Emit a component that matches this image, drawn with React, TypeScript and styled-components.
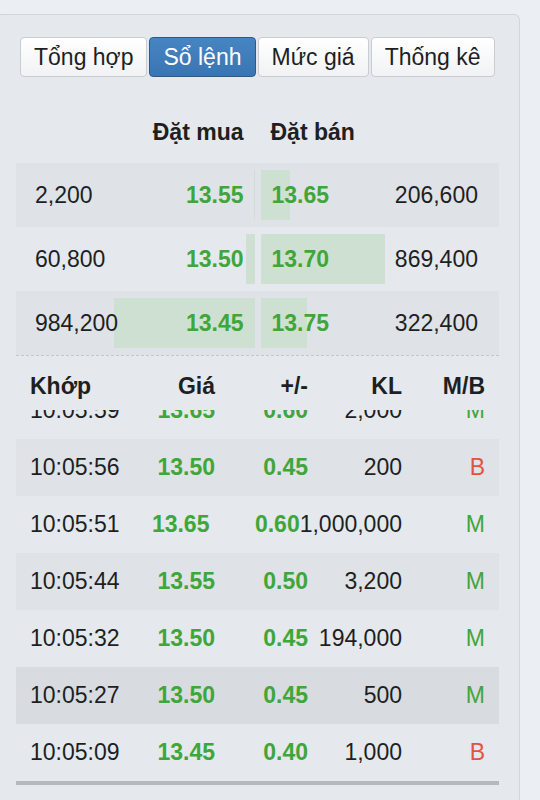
import { useLayoutEffect, useRef } from "react";
import styled, { createGlobalStyle } from "styled-components";

const GlobalStyle = createGlobalStyle`
  html, body {
    margin: 0;
    overflow: hidden;
  }
  body {
    background: #ebeef2;
    font-family: "Liberation Sans", Arial, sans-serif;
    color: #1d1f23;
  }
`;

const Panel = styled.div`
  margin: 14px 20px 0 -4px;
  min-height: calc(100vh - 14px);
  box-sizing: border-box;
  padding: 22px 20px 0 19px;
  background: #e5e8ec;
  border: 1px solid #d2d6db;
  border-bottom: none;
  border-radius: 6px 6px 0 0;
`;

const TabBar = styled.div`
  display: flex;
  gap: 2px;
  margin: 0 4px;
`;

const Tab = styled.button<{ $active?: boolean }>`
  flex: 0 0 auto;
  height: 40px;
  padding: 0 13px;
  white-space: nowrap;
  font: 23px "Liberation Sans", Arial, sans-serif;
  border-radius: 4px;
  border: 1px solid ${(p) => (p.$active ? "#2b5b8d" : "#c9cdd2")};
  background: ${(p) =>
    p.$active
      ? "linear-gradient(#4785c2, #3975b2)"
      : "linear-gradient(#ffffff, #f1f2f4)"};
  color: ${(p) => (p.$active ? "#ffffff" : "#1d1f23")};
`;

const BookHeader = styled.div`
  display: grid;
  grid-template-columns: 1fr 1fr;
  padding: 39px 0 15px;
  line-height: 32px;
  font-size: 23px;
  font-weight: bold;
`;

const HeadBuy = styled.div`
  text-align: right;
  padding-right: 14px;
`;

const HeadSell = styled.div`
  padding-left: 13px;
`;

const BookRow = styled.div<{ $shaded?: boolean }>`
  display: grid;
  grid-template-columns: 1fr 1fr;
  height: 64px;
  background: ${(p) => (p.$shaded ? "#dfe2e6" : "transparent")};
  font-size: 23px;
`;

const Half = styled.div<{ $side: "buy" | "sell" }>`
  position: relative;
  display: flex;
  align-items: center;
  justify-content: space-between;
  padding: ${(p) => (p.$side === "buy" ? "0 14px 0 19px" : "0 21px 0 14px")};
`;

const Bar = styled.div<{ $side: "buy" | "sell" }>`
  position: absolute;
  top: 7px;
  bottom: 7px;
  ${(p) => (p.$side === "buy" ? "right: 3px;" : "left: 3px;")}
  background: #cee0d2;
`;

const Volume = styled.span`
  position: relative;
`;

const Price = styled.span`
  position: relative;
  font-weight: bold;
  color: #3fa63a;
`;

const TradeHead = styled.div`
  display: flex;
  padding: 15px 14px 9px;
  line-height: 30px;
  font-size: 23px;
  font-weight: bold;
  border-top: 1px dashed #c3c7cc;
`;

const Cell = styled.div<{ $basis: number; $left?: boolean; $fixed?: boolean; $tone?: "up" | "bold" }>`
  flex: ${(p) => (p.$fixed ? "0 0" : "0 1")} ${(p) => p.$basis}px;
  text-align: ${(p) => (p.$left ? "left" : "right")};
  white-space: nowrap;
  font-weight: ${(p) => (p.$tone ? "bold" : "inherit")};
  color: ${(p) => (p.$tone === "up" ? "#3fa63a" : "inherit")};
`;

const Side = styled.div<{ $buy: boolean }>`
  flex: 0 0 83px;
  text-align: right;
  color: ${(p) => (p.$buy ? "#3fa63a" : "#e0543f")};
`;

const TradeList = styled.div`
  height: 371px;
  overflow-y: auto;
  border-bottom: 4px solid #b5b9be;
  scrollbar-width: none;
  &::-webkit-scrollbar {
    display: none;
  }
`;

const TradeRow = styled.div<{ $tone: "plain" | "shaded" | "hover" }>`
  display: flex;
  align-items: center;
  height: 57px;
  padding: 0 14px;
  font-size: 23px;
  background: ${(p) =>
    p.$tone === "hover" ? "#d8dbdf" : p.$tone === "shaded" ? "#dfe2e6" : "transparent"};
`;

const book = [
  { buyVol: 2200, buyPrice: "13.55", sellPrice: "13.65", sellVol: 206600 },
  { buyVol: 60800, buyPrice: "13.50", sellPrice: "13.70", sellVol: 869400 },
  { buyVol: 984200, buyPrice: "13.45", sellPrice: "13.75", sellVol: 322400 },
];

const trades = [
  { time: "10:05:59", price: "13.65", change: "0.60", vol: "2,000", side: "M" },
  { time: "10:05:56", price: "13.50", change: "0.45", vol: "200", side: "B" },
  { time: "10:05:51", price: "13.65", change: "0.60", vol: "1,000,000", side: "M" },
  { time: "10:05:44", price: "13.55", change: "0.50", vol: "3,200", side: "M" },
  { time: "10:05:32", price: "13.50", change: "0.45", vol: "194,000", side: "M" },
  { time: "10:05:27", price: "13.50", change: "0.45", vol: "500", side: "M" },
  { time: "10:05:09", price: "13.45", change: "0.40", vol: "1,000", side: "B" },
];

const tabs = ["Tổng hợp", "Sổ lệnh", "Mức giá", "Thống kê"];

const maxVol = Math.max(...book.map((r) => Math.max(r.buyVol, r.sellVol)));
const fmt = (n: number) => n.toLocaleString("en-US");

function App() {
  const listRef = useRef<HTMLDivElement>(null);

  // danh sách khớp lệnh cuộn xuống cuối
  useLayoutEffect(() => {
    if (listRef.current) listRef.current.scrollTop = listRef.current.scrollHeight;
  }, []);

  return (
    <>
      <GlobalStyle />
      <Panel>
        <TabBar>
          {tabs.map((t) => (
            <Tab key={t} $active={t === "Sổ lệnh"}>
              {t}
            </Tab>
          ))}
        </TabBar>

        <BookHeader>
          <HeadBuy>Đặt mua</HeadBuy>
          <HeadSell>Đặt bán</HeadSell>
        </BookHeader>

        {book.map((r, i) => (
          <BookRow key={r.buyPrice} $shaded={i % 2 === 0}>
            <Half $side="buy">
              <Bar $side="buy" style={{ width: (r.buyVol / maxVol) * 141 }} />
              <Volume>{fmt(r.buyVol)}</Volume>
              <Price>{r.buyPrice}</Price>
            </Half>
            <Half $side="sell">
              <Bar $side="sell" style={{ width: (r.sellVol / maxVol) * 141 }} />
              <Price>{r.sellPrice}</Price>
              <Volume>{fmt(r.sellVol)}</Volume>
            </Half>
          </BookRow>
        ))}

        <TradeHead>
          <Cell $basis={100} $left>Khớp</Cell>
          <Cell $basis={85}>Giá</Cell>
          <Cell $basis={93}>+/-</Cell>
          <Cell $basis={94}>KL</Cell>
          <Cell $basis={83} $fixed>M/B</Cell>
        </TradeHead>

        <TradeList ref={listRef}>
          {trades.map((t, i) => (
            <TradeRow
              key={t.time}
              $tone={t.time === "10:05:27" ? "hover" : i % 2 === 1 ? "shaded" : "plain"}
            >
              <Cell $basis={100} $left>{t.time}</Cell>
              <Cell $basis={85} $tone="up">{t.price}</Cell>
              <Cell $basis={93} $tone="up">{t.change}</Cell>
              <Cell $basis={94}>{t.vol}</Cell>
              <Side $buy={t.side === "M"}>{t.side}</Side>
            </TradeRow>
          ))}
        </TradeList>
      </Panel>
    </>
  );
}

export default App;
